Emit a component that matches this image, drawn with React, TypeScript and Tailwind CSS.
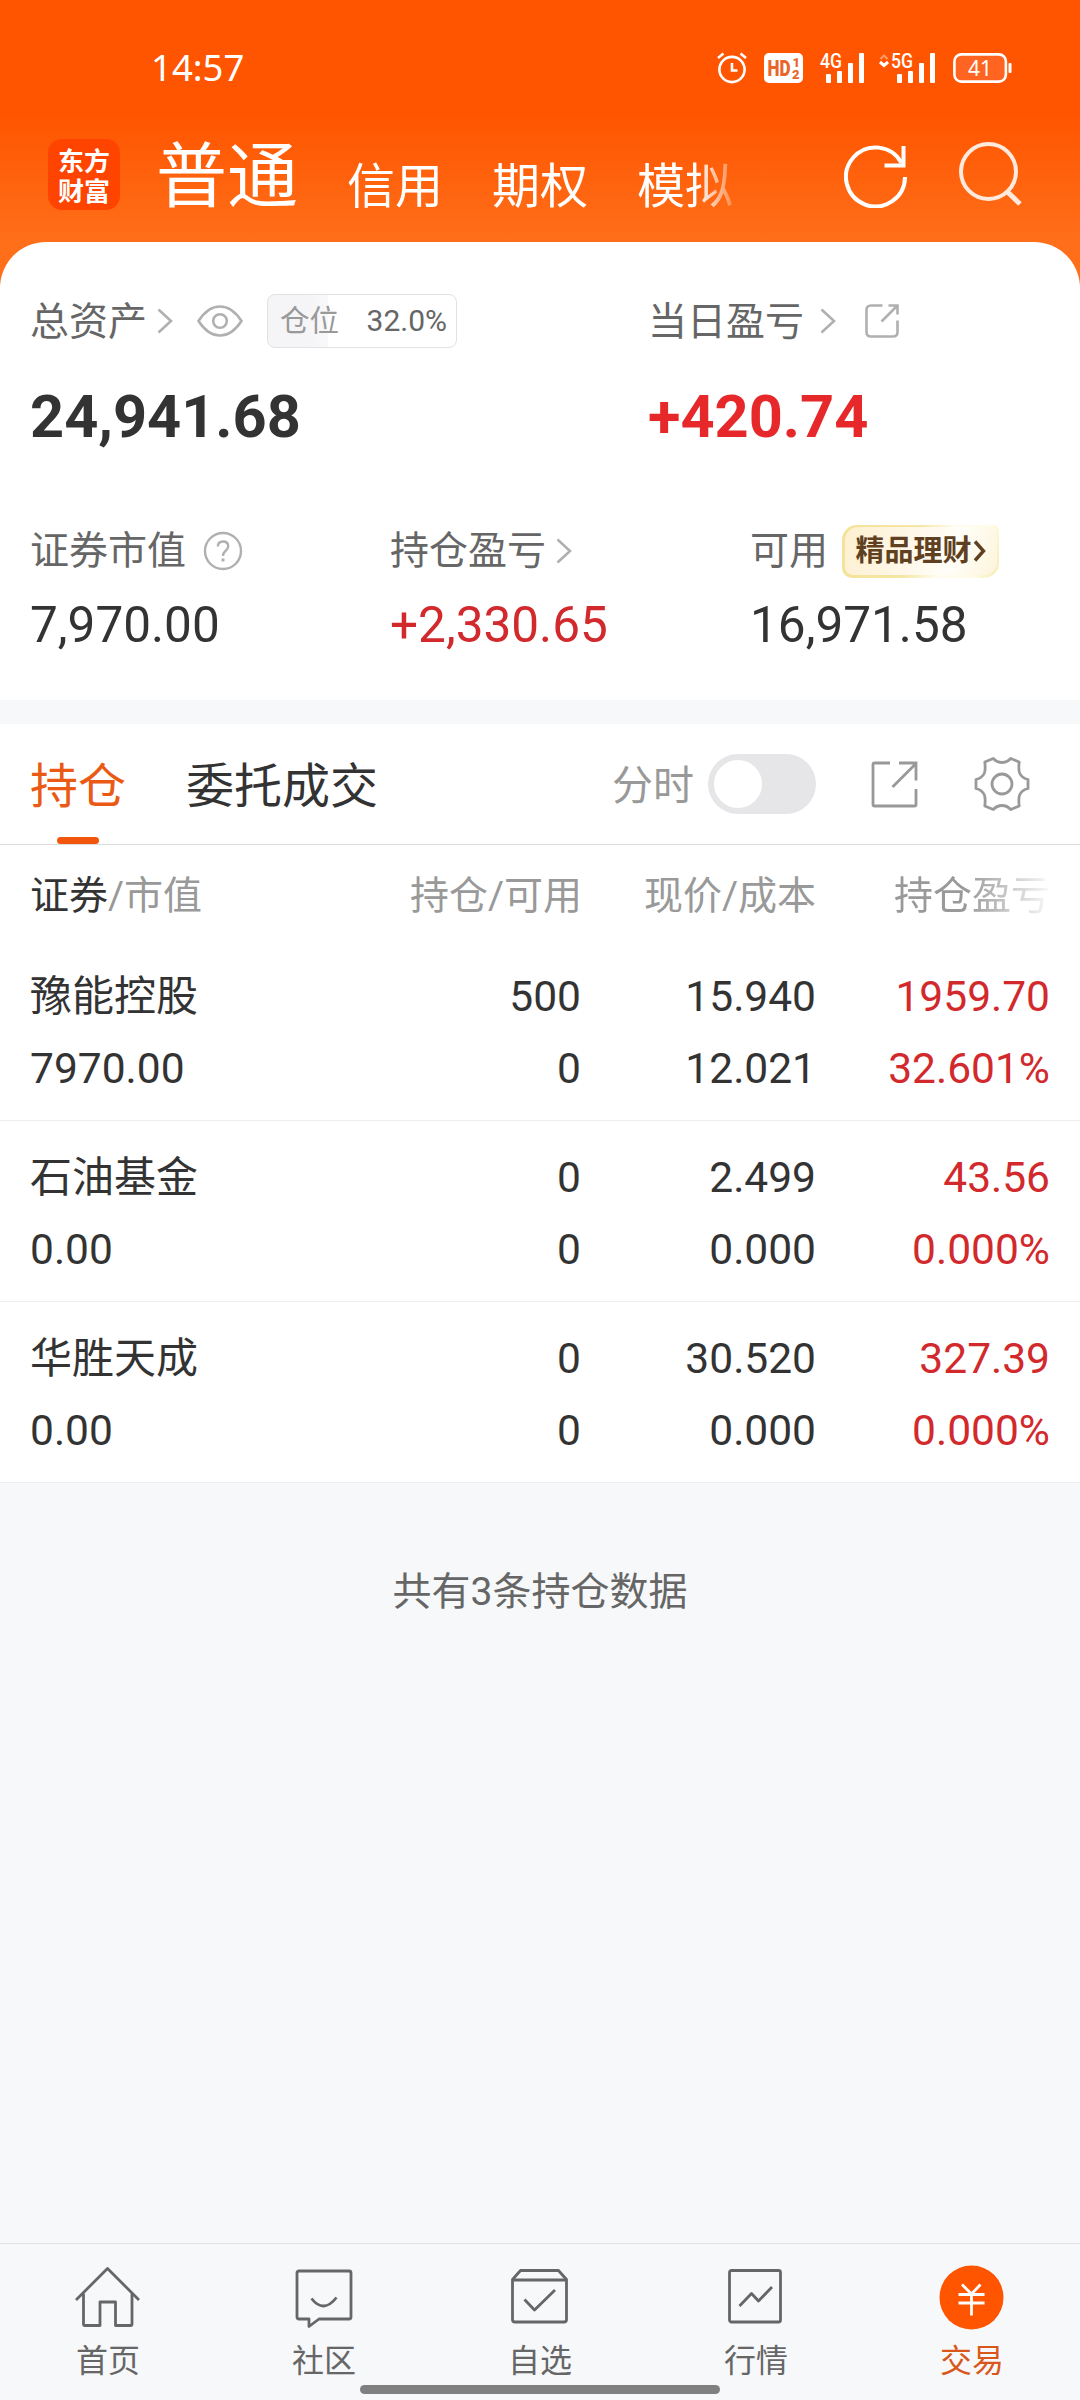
import { useState } from "react";
import type { ReactNode } from "react";

interface Holding {
    name: string;
    marketValue: string;
    amount: string;
    available: string;
    price: string;
    cost: string;
    profit: string;
    profitRate: string;
}

const accountTabs = ["信用", "期权", "模拟"];

const holdings: Holding[] = [
    {
        name: "豫能控股",
        marketValue: "7970.00",
        amount: "500",
        available: "0",
        price: "15.940",
        cost: "12.021",
        profit: "1959.70",
        profitRate: "32.601%",
    },
    {
        name: "石油基金",
        marketValue: "0.00",
        amount: "0",
        available: "0",
        price: "2.499",
        cost: "0.000",
        profit: "43.56",
        profitRate: "0.000%",
    },
    {
        name: "华胜天成",
        marketValue: "0.00",
        amount: "0",
        available: "0",
        price: "30.520",
        cost: "0.000",
        profit: "327.39",
        profitRate: "0.000%",
    },
];

const Chevron = ({ className }: { className?: string }) => (
    <svg className={className} width="16" height="26" viewBox="0 0 16 26" fill="none" stroke="#b0b0b0" strokeWidth="2.6">
        <path d="M1.5 1.5 L14 13 L1.5 24.5" />
    </svg>
);

const SignalBars = () => (
    <g fill="#fff">
        <rect x="0" y="21" width="5" height="9" rx="1" />
        <rect x="11" y="18" width="5" height="12" rx="1" />
        <rect x="22" y="10" width="5" height="20" rx="1" />
        <rect x="33" y="0" width="5" height="30" rx="1" />
    </g>
);

const StatusBar = () => (
    <div className="flex h-[136px] items-start justify-between pl-[151px] pr-[68px] pt-[50px] text-white">
        <span className="-mt-px font-['Noto_Sans',sans-serif] text-[36.5px] leading-[37px]">14:57</span>
        <div className="flex items-center pt-[2px]">
            <svg width="30" height="32" viewBox="0 0 30 32" fill="none" stroke="#fff" strokeWidth="2.6">
                <circle cx="15" cy="17.5" r="12.6" />
                <path d="M15 11 V18.5 H20.5" />
                <path d="M1 6 L6.5 1.6 M29 6 L23.5 1.6" />
            </svg>
            <svg className="ml-[17px]" width="39" height="30" viewBox="0 0 39 30" fontFamily="Roboto, sans-serif" fontWeight="900" fill="#e8662a">
                <rect width="39" height="30" rx="5" fill="#fff" />
                <text x="3.5" y="23" fontSize="22.5" textLength="23" lengthAdjust="spacingAndGlyphs">HD</text>
                <text x="28.5" y="14" fontSize="13">1</text>
                <text x="28" y="26" fontSize="13">2</text>
            </svg>
            <svg className="ml-[17px]" width="45" height="30" viewBox="0 0 45 30" overflow="visible">
                <text x="0" y="14.5" fontSize="20" fontWeight="500" fontFamily="Roboto, sans-serif" fill="#fff" textLength="22" lengthAdjust="spacingAndGlyphs">4G</text>
                <g transform="translate(6 0)"><SignalBars /></g>
            </svg>
            <svg className="ml-[14px]" width="57" height="30" viewBox="0 0 57 30" overflow="visible">
                <path d="M1.5 6 L5 2.5 L8.5 6" fill="none" stroke="#ff9a66" strokeWidth="2" />
                <path d="M1 9 L5 12.5 L9 9" fill="none" stroke="#fff" strokeWidth="3" />
                <text x="12" y="14.5" fontSize="20" fontWeight="500" fontFamily="Roboto, sans-serif" fill="#fff" textLength="22" lengthAdjust="spacingAndGlyphs">5G</text>
                <g transform="translate(18 0)"><SignalBars /></g>
            </svg>
            <svg className="ml-[17px]" width="59" height="30" viewBox="0 0 59 30">
                <rect x="1.4" y="1.4" width="51.5" height="27.2" rx="7" fill="#ff6420" stroke="#fff" strokeWidth="2.6" />
                <rect x="55.5" y="10" width="3" height="10" rx="1" fill="#fff" />
                <text x="27" y="22.5" textAnchor="middle" fontSize="21" fontFamily="Noto Sans, sans-serif" fill="#fff">41</text>
            </svg>
        </div>
    </div>
);

const AccountHeader = () => (
    <div className="flex h-[106px] items-start pl-[48px] pr-[58px] text-white">
        <div className="mt-[3px] flex h-[71px] w-[72px] flex-col items-center justify-center rounded-[14px] bg-[#ff4400] font-['Noto_Sans_CJK_SC',sans-serif] text-[26px] font-bold leading-[30px]">
            <span>东方</span>
            <span>财富</span>
        </div>
        <div className="ml-[36px] mt-[2px] flex h-[74px] w-[582px] items-end gap-[49px] whitespace-nowrap [mask-image:linear-gradient(to_right,#000_540px,transparent_590px)]">
            <span className="text-[71px] leading-[71px]">普通</span>
            {accountTabs.map((tab) => (
                <span key={tab} className="text-[48px] leading-[50px]">{tab}</span>
            ))}
        </div>
        <div className="ml-auto flex gap-[50px] pt-[6px]">
            <svg className="mt-[2px]" width="64" height="64" viewBox="0 0 64 64" fill="none" stroke="#fff" strokeWidth="4">
                <path d="M61 33 A29.5 29.5 0 1 1 57.5 19" />
                <path d="M40.5 21.5 H59.5 V2" />
            </svg>
            <svg width="64" height="64" viewBox="0 0 64 64" fill="none" stroke="#ffeadd" strokeWidth="4">
                <circle cx="30.5" cy="29.5" r="27.5" />
                <path d="M49 49.5 L62 62" strokeWidth="5" />
            </svg>
        </div>
    </div>
);

const AssetCard = () => (
    <div className="h-[458px] rounded-t-[46px] bg-white pl-[30px] pt-[52px] text-[#666]">
        <div className="flex">
            <div className="w-[618px]">
                <div className="flex h-[54px] items-center">
                    <span className="pt-[2px] text-[39px] leading-none">总资产</span>
                    <Chevron className="ml-[10px]" />
                    <svg className="ml-[24px]" width="46" height="32" viewBox="0 0 46 32" fill="none" stroke="#b0b0b0" strokeWidth="2.6">
                        <path d="M1.5 16 C8 6 15 1.5 23 1.5 S38 6 44.5 16 C38 26 31 30.5 23 30.5 S8 26 1.5 16 Z" />
                        <circle cx="23" cy="16" r="6.8" />
                    </svg>
                    <div className="ml-[24px] flex h-[54px] w-[190px] items-center justify-between rounded-[8px] border border-[#e2e2e4] bg-[linear-gradient(to_right,#f5f5f8_20%,#f8f8fa_32%,#fff_32%)] pl-[12px] pr-[9px] text-[30px] leading-none">
                        <span className="pt-[2px] text-[29.5px] text-[#999]">仓位</span>
                        <span>32.0%</span>
                    </div>
                </div>
                <div className="mt-[39px] text-[59.5px] font-bold leading-[60px] text-[#333]">24,941.68</div>
            </div>
            <div>
                <div className="flex h-[54px] items-center">
                    <span className="pt-[2px] text-[39px] leading-none">当日盈亏</span>
                    <Chevron className="ml-[16px]" />
                    <svg className="ml-[29px]" width="34" height="34" viewBox="0 0 34 34" fill="none" stroke="#b0b0b0" strokeWidth="2.6">
                        <path d="M17.5 1.5 H6 Q1.5 1.5 1.5 6 V28 Q1.5 32.5 6 32.5 H28 Q32.5 32.5 32.5 28 V16.5" />
                        <path d="M16.5 17.5 L32 2 M23.5 1.5 H32.5 V10.5" />
                    </svg>
                </div>
                <div className="mt-[39px] text-[59.5px] font-bold leading-[60px] text-[#e6282b]">+420.74</div>
            </div>
        </div>
        <div className="mt-[77px] flex">
            <div className="w-[360px]">
                <div className="flex h-[54px] items-center">
                    <span className="pt-px text-[39px] leading-none">证券市值</span>
                    <svg className="ml-[17px]" width="40" height="40" viewBox="0 0 40 40" fill="none" stroke="#b0b0b0" strokeWidth="2.4">
                        <circle cx="20" cy="20" r="18" />
                        <path d="M14.8 15.5 Q15 10.5 20 10.5 Q25.2 10.5 25.2 15.2 Q25.2 17.8 22.5 20 Q20 22 20 25" />
                        <path d="M20 27.5 V30.5" strokeWidth="3" />
                    </svg>
                </div>
                <div className="mt-[17px] text-[49.5px] leading-[60px] text-[#333]">7,970.00</div>
            </div>
            <div className="w-[360px]">
                <div className="flex h-[54px] items-center">
                    <span className="pt-px text-[39px] leading-none">持仓盈亏</span>
                    <Chevron className="ml-[10px]" />
                </div>
                <div className="mt-[17px] text-[49.5px] leading-[60px] text-[#d2292d]">+2,330.65</div>
            </div>
            <div>
                <div className="flex h-[54px] items-center">
                    <span className="pt-px text-[39px] leading-none">可用</span>
                    <div className="ml-[14px] flex h-[53px] w-[157px] rounded-tl-[15px] rounded-tr-[6px] rounded-br-[15px] rounded-bl-[10px] bg-[linear-gradient(110deg,#f4e296_0%,#f5e6a4_45%,#fffdf2_65%,#fffbe6_85%,#f5ebb0_100%)] p-[2.5px]">
                        <div className="flex flex-1 items-center rounded-tl-[13px] rounded-tr-[5px] rounded-br-[13px] rounded-bl-[8px] bg-[linear-gradient(110deg,#fdf0d0_0%,#fff8ea_45%,#fffef8_70%,#fdf4dc_100%)] pl-[11px]">
                            <span className="pt-px text-[29px] font-bold leading-none text-[#5f4020]">精品理财</span>
                            <svg className="ml-px" width="13" height="22" viewBox="0 0 13 22" fill="none" stroke="#5f4020" strokeWidth="3.4">
                                <path d="M2 1.5 L10.5 11 L2 20.5" />
                            </svg>
                        </div>
                    </div>
                </div>
                <div className="mt-[17px] text-[49.5px] leading-[60px] text-[#333]">16,971.58</div>
            </div>
        </div>
    </div>
);

const HoldingTabs = () => {
    const [timeline, setTimeline] = useState(false);
    return (
        <div className="flex h-[121px] items-center border-b border-[#dcdcdc] pl-[30px] pr-[50px]">
            <div className="relative flex h-full items-center text-[48px] leading-none text-[#ea5a14]">
                <span className="pt-[5px]">持仓</span>
                <span className="absolute bottom-0 left-[27px] h-[7px] w-[42px] rounded-full bg-[#f2560d]" />
            </div>
            <span className="ml-[60px] pt-[5px] text-[48px] leading-none text-[#333]">委托成交</span>
            <span className="ml-auto pt-[5px] text-[41px] leading-none text-[#999]">分时</span>
            <button
                className="ml-[14px] flex h-[60px] w-[108px] items-center rounded-full bg-[#e6e6e9] px-[6px]"
                onClick={() => setTimeline(!timeline)}
            >
                <span className={timeline ? "ml-auto size-[48px] rounded-full bg-white" : "size-[48px] rounded-full bg-white"} />
            </button>
            <svg className="ml-[55px]" width="47" height="47" viewBox="0 0 47 47" fill="none" stroke="#999" strokeWidth="2.8">
                <path d="M19 2 H3.5 Q2 2 2 3.5 V43.5 Q2 45 3.5 45 H43.5 Q45 45 45 43.5 V28" />
                <path d="M21.5 26 L44.5 3 M28 2 H45 V19.5" />
            </svg>
            <svg className="ml-[56px]" width="56" height="56" viewBox="-1 -1 56 56" fill="none" stroke="#999" strokeWidth="2.8" strokeLinejoin="round">
                <path d="M9.8 5 L18.3 1.5 Q22 5.5 27 5.5 T35.7 1.5 L44.2 5 Q43.2 13 44.8 16.5 Q47 21 53 22.5 V31.5 Q47 33 44.8 37.5 Q43.2 41 44.2 49 L35.7 52.5 Q32 48.5 27 48.5 T18.3 52.5 L9.8 49 Q10.8 41 9.2 37.5 Q7 33 1 31.5 V22.5 Q7 21 9.2 16.5 Q10.8 13 9.8 5 Z" />
                <circle cx="27" cy="27" r="10" />
            </svg>
        </div>
    );
};

const HoldingRow = ({ item }: { item: Holding }) => (
    <div className="grid h-[181px] grid-cols-[250px_301px_235px_234px] content-start border-b border-[#eeeeef] pl-[30px] pt-[21px] text-right text-[42.5px] leading-[72px] text-[#333]">
        <span className="text-left text-[42px]">{item.name}</span>
        <span>{item.amount}</span>
        <span>{item.price}</span>
        <span className="text-[#d2292d]">{item.profit}</span>
        <span className="text-left">{item.marketValue}</span>
        <span>{item.available}</span>
        <span>{item.cost}</span>
        <span className="text-[#d2292d]">{item.profitRate}</span>
    </div>
);

const NavItem = ({ label, active, children }: { label: string; active?: boolean; children: ReactNode }) => (
    <div className={active ? "flex flex-col items-center text-[#d9571a]" : "flex flex-col items-center text-[#666]"}>
        <svg width="66" height="66" viewBox="0.5 0.5 66 66" fill="none" stroke="#666" strokeWidth="2.8" strokeLinejoin="round">
            {children}
        </svg>
        <span className="mt-[15px] text-[32px] leading-[32px]">{label}</span>
    </div>
);

const BottomNav = () => (
    <div className="relative grid h-[157px] grid-cols-5 border-t border-[#e3e3e5] pt-[20px]">
        <NavItem label="首页">
            <path d="M1.5 36.5 L33 5 L64.5 36.5" />
            <path d="M9 30 V60.5 Q9 62 10.5 62 H25.5 V38.5 H41 V62 H56 Q57.5 62 57.5 60.5 V30" />
        </NavItem>
        <NavItem label="社区">
            <path d="M8.5 7.5 H58.5 Q60.5 7.5 60.5 9.5 V53.5 Q60.5 55.5 58.5 55.5 H28.5 L18.5 63 V55.5 H8.5 Q6.5 55.5 6.5 53.5 V9.5 Q6.5 7.5 8.5 7.5" />
            <path d="M21 35 Q33 50.5 46 34" />
        </NavItem>
        <NavItem label="自选">
            <path d="M6 16 L14 7 H52 L60 16 V56 Q60 58.5 57.5 58.5 H8.5 Q6 58.5 6 56 Z" />
            <path d="M6 16.5 H60 M18 36 L28 46.5 L48.5 26.5" />
        </NavItem>
        <NavItem label="行情">
            <rect x="7" y="7" width="51" height="51.5" rx="2" />
            <path d="M17 42.5 L29 30 L36 37.5 L49.5 23.5" />
        </NavItem>
        <NavItem label="交易" active>
            <circle cx="33" cy="34" r="32" fill="#ff5500" stroke="none" />
            <path d="M23.5 21 L33 30.5 L42 21 M20 31 H46 M20 39.5 H46 M33 30.5 V52" stroke="#fff" strokeLinejoin="miter" />
        </NavItem>
        <span className="absolute bottom-[6px] left-[360px] h-[9px] w-[360px] rounded-full bg-[#808080]" />
    </div>
);

export default function App() {
    return (
        <div className="flex h-[2400px] w-[1080px] flex-col bg-[#f7f8fa] font-['Roboto','Noto_Sans_CJK_SC',sans-serif]">
            <div className="bg-[linear-gradient(to_bottom,#ff5500_115px,#ff6f1a_242px)]">
                <StatusBar />
                <AccountHeader />
                <AssetCard />
            </div>
            <div className="mt-[24px] bg-white">
                <HoldingTabs />
                <div className="grid h-[95px] grid-cols-[250px_302px_234px_234px] items-center pl-[30px] pt-[6px] text-right text-[39px] leading-[60px] text-[#999]">
                    <span className="text-left"><span className="text-[#333]">证券</span>/市值</span>
                    <span>持仓/可用</span>
                    <span>现价/成本</span>
                    <span className="[mask-image:linear-gradient(to_right,#000_150px,transparent_240px)]">持仓盈亏</span>
                </div>
                {holdings.map((item) => (
                    <HoldingRow key={item.name} item={item} />
                ))}
            </div>
            <div className="mt-[79px] text-center text-[39px] leading-[60px] text-[#666]">共有3条持仓数据</div>
            <div className="mt-auto">
                <BottomNav />
            </div>
        </div>
    );
}
